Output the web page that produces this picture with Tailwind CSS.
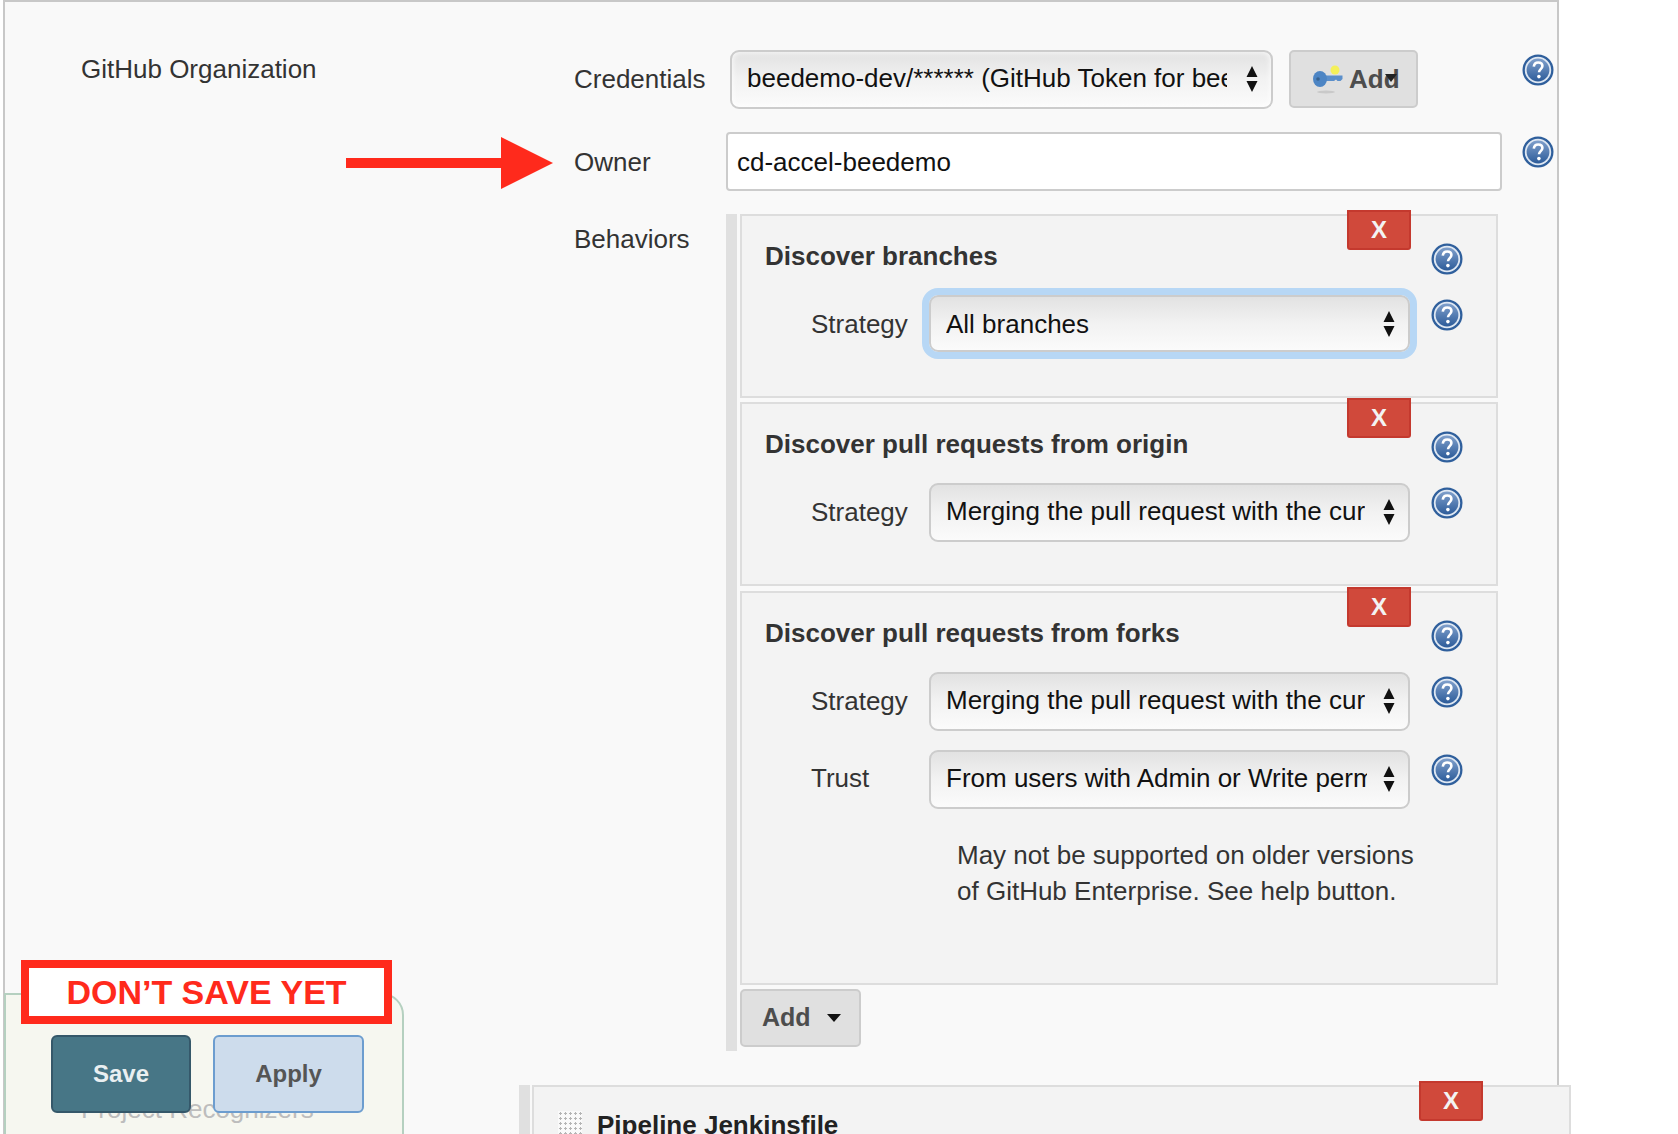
<!DOCTYPE html>
<html lang="en">

<head>
    <meta charset="UTF-8">
    <script src="https://cdn.jsdelivr.net/npm/@tailwindcss/browser@4"></script>
    <title>GitHub Organization</title>
</head>

<body class="bg-white">

    <!-- shared help icon -->
    <svg width="0" height="0" class="absolute">
        <defs>
            <linearGradient id="helpFill" x1="0" y1="0" x2="0" y2="1">
                <stop offset="0" stop-color="#7f9fcb" />
                <stop offset="1" stop-color="#2d5c9a" />
            </linearGradient>
            <symbol id="help" viewBox="0 0 32 32">
                <circle cx="16" cy="16" r="15.5" fill="#2f5f9c" />
                <circle cx="16" cy="16" r="13.2" fill="#dfe8f3" />
                <circle cx="16" cy="16" r="11.4" fill="url(#helpFill)" />
                <path d="M11.8 12.6c.3-2.7 2-4.1 4.4-4.1 2.5 0 4.2 1.5 4.2 3.6 0 3-3.4 3.1-3.4 6.2" fill="none" stroke="#fff" stroke-width="2.6" />
                <circle cx="16.9" cy="22.6" r="1.8" fill="#fff" />
            </symbol>
            <symbol id="updown" viewBox="0 0 12 26">
                <path d="M6 0l5.500 11H.5zM6 26L.5 15h11z" fill="#111" />
            </symbol>
        </defs>
    </svg>

    <div class="relative w-[1678px] h-[1134px] overflow-hidden font-['Liberation_Sans',Arial,sans-serif] text-[26px] text-[#333]">

        <!-- Main panel -->
        <div class="ml-[3px] w-[1556px] h-[1134px] border-t-2 border-l-2 border-r-2 border-[#c8c8c8] bg-[#f9f9f9] flex">

            <div class="w-[493px] ml-[76px] shrink-0 pt-[50px] leading-[34px]">GitHub Organization</div>

            <div class="w-[980px] shrink-0 pt-[48px]">

                <!-- Credentials -->
                <div class="flex items-start h-[82px]">
                    <div class="w-[156px] pt-[12px] leading-[34px]">Credentials</div>
                    <div class="w-[543px] h-[59px] flex items-center pl-[15px] pr-[13px] pb-[2px] rounded-[9px] border-2 border-[#ccc] bg-gradient-to-b from-[#e2e2e2] via-[#f2f2f2] to-[#fbfbfb] shadow-[inset_0_0_6px_#fff] text-[#111]">
                        <div class="flex-1 overflow-hidden whitespace-nowrap">beedemo-dev/****** (GitHub Token for bee</div>
                        <svg class="w-[12px] h-[26px] ml-[19px] shrink-0"><use href="#updown" /></svg>
                    </div>
                    <div class="relative w-[129px] h-[58px] ml-[16px] flex items-center pl-[21px] gap-[5px] rounded-[5px] border-2 border-[#ccc] bg-[#e0e0e0] font-bold text-[#4d4d4d]">
                        <svg width="32" height="34" viewBox="0 0 32 34" class="shrink-0">
                            <ellipse cx="14" cy="30" rx="9" ry="1.400" fill="#c9c9c9" />
                            <circle cx="23" cy="8" r="4.500" fill="#f4f05a" />
                            <path d="M11 13.500h19.500v3.500l-2 2h-3l-1.500-1.500-2 1.500h-11z" fill="#5b8fcb" />
                            <ellipse cx="8" cy="17" rx="7" ry="8" fill="#4d85c4" />
                            <circle cx="6" cy="17" r="1.800" fill="#37628f" />
                        </svg>
                        <span>Add</span>
                        <div class="absolute left-[94px] top-[22px] border-x-[6px] border-t-[8px] border-x-transparent border-t-[#222]"></div>
                    </div>
                    <svg class="w-[32px] h-[32px] ml-[104px] mt-[4px] shrink-0"><use href="#help" /></svg>
                </div>

                <!-- Owner -->
                <div class="flex items-start h-[82px]">
                    <div class="w-[152px] pt-[13px] leading-[34px]">Owner</div>
                    <div class="w-[776px] h-[59px] flex items-center pl-[9px] pt-[1px] rounded-[4px] border-2 border-[#ccc] bg-white text-[#111]">cd-accel-beedemo</div>
                    <svg class="w-[32px] h-[32px] ml-[20px] mt-[4px] shrink-0"><use href="#help" /></svg>
                </div>

                <!-- Behaviors -->
                <div class="flex items-start">
                    <div class="w-[152px] pt-[8px] leading-[34px]">Behaviors</div>
                    <div class="w-[772px] border-l-[11px] border-[#e0e0e0] pl-[3px] h-[837px]">

                        <div class="relative w-[758px] h-[184px] mb-[4px] border-2 border-[#ddd] bg-[#f3f3f3]">
                            <div class="absolute left-[605px] top-[-6px] w-[64px] h-[40px] flex items-center justify-center rounded-b-[3px] border-2 border-[#c4392e] bg-[#d0493b] text-[#f3f3f3] text-[24px] font-bold">X</div>
                            <div class="flex items-start pl-[23px] pt-[24px] h-[79px] font-bold">
                                <div class="w-[666px] leading-[32px]">Discover branches</div>
                                <svg class="w-[32px] h-[32px] mt-[3px]"><use href="#help" /></svg>
                            </div>
                            <div class="flex items-start pl-[69px]">
                                <div class="w-[118px] pt-[12px] leading-[34px]">Strategy</div>
                                <div class="w-[481px] h-[57px] flex items-center pl-[15px] pr-[13px] pt-[1px] rounded-[9px] border-2 border-[#ccc] bg-gradient-to-b from-[#e2e2e2] via-[#f2f2f2] to-[#fbfbfb] outline-[7px] outline-[#b7d7f5] text-[#111]">
                                    <div class="flex-1 overflow-hidden whitespace-nowrap">All branches</div>
                                    <svg class="w-[12px] h-[26px] ml-[16px] shrink-0"><use href="#updown" /></svg>
                                </div>
                                <svg class="w-[32px] h-[32px] ml-[21px] mt-[4px]"><use href="#help" /></svg>
                            </div>
                        </div>

                        <div class="relative w-[758px] h-[184px] mb-[5px] border-2 border-[#ddd] bg-[#f3f3f3]">
                            <div class="absolute left-[605px] top-[-6px] w-[64px] h-[40px] flex items-center justify-center rounded-b-[3px] border-2 border-[#c4392e] bg-[#d0493b] text-[#f3f3f3] text-[24px] font-bold">X</div>
                            <div class="flex items-start pl-[23px] pt-[24px] h-[79px] font-bold">
                                <div class="w-[666px] leading-[32px]">Discover pull requests from origin</div>
                                <svg class="w-[32px] h-[32px] mt-[3px]"><use href="#help" /></svg>
                            </div>
                            <div class="flex items-start pl-[69px]">
                                <div class="w-[118px] pt-[12px] leading-[34px]">Strategy</div>
                                <div class="w-[481px] h-[59px] flex items-center pl-[15px] pr-[13px] pb-[2px] rounded-[9px] border-2 border-[#ccc] bg-gradient-to-b from-[#e2e2e2] via-[#f2f2f2] to-[#fbfbfb] text-[#111]">
                                    <div class="flex-1 overflow-hidden whitespace-nowrap">Merging the pull request with the current target branch revision</div>
                                    <svg class="w-[12px] h-[26px] ml-[18px] shrink-0"><use href="#updown" /></svg>
                                </div>
                                <svg class="w-[32px] h-[32px] ml-[21px] mt-[4px]"><use href="#help" /></svg>
                            </div>
                        </div>

                        <div class="relative w-[758px] h-[394px] mb-[4px] border-2 border-[#ddd] bg-[#f3f3f3]">
                            <div class="absolute left-[605px] top-[-6px] w-[64px] h-[40px] flex items-center justify-center rounded-b-[3px] border-2 border-[#c4392e] bg-[#d0493b] text-[#f3f3f3] text-[24px] font-bold">X</div>
                            <div class="flex items-start pl-[23px] pt-[24px] h-[79px] font-bold">
                                <div class="w-[666px] leading-[32px]">Discover pull requests from forks</div>
                                <svg class="w-[32px] h-[32px] mt-[3px]"><use href="#help" /></svg>
                            </div>
                            <div class="flex items-start pl-[69px] h-[78px]">
                                <div class="w-[118px] pt-[12px] leading-[34px]">Strategy</div>
                                <div class="w-[481px] h-[59px] flex items-center pl-[15px] pr-[13px] pb-[2px] rounded-[9px] border-2 border-[#ccc] bg-gradient-to-b from-[#e2e2e2] via-[#f2f2f2] to-[#fbfbfb] text-[#111]">
                                    <div class="flex-1 overflow-hidden whitespace-nowrap">Merging the pull request with the current target branch revision</div>
                                    <svg class="w-[12px] h-[26px] ml-[18px] shrink-0"><use href="#updown" /></svg>
                                </div>
                                <svg class="w-[32px] h-[32px] ml-[21px] mt-[4px]"><use href="#help" /></svg>
                            </div>
                            <div class="flex items-start pl-[69px]">
                                <div class="w-[118px] pt-[11px] leading-[34px]">Trust</div>
                                <div class="w-[481px] h-[59px] flex items-center pl-[15px] pr-[13px] pb-[2px] rounded-[9px] border-2 border-[#ccc] bg-gradient-to-b from-[#e2e2e2] via-[#f2f2f2] to-[#fbfbfb] text-[#111]">
                                    <div class="flex-1 overflow-hidden whitespace-nowrap">From users with Admin or Write permission</div>
                                    <svg class="w-[12px] h-[26px] ml-[16px] shrink-0"><use href="#updown" /></svg>
                                </div>
                                <svg class="w-[32px] h-[32px] ml-[21px] mt-[4px]"><use href="#help" /></svg>
                            </div>
                            <div class="ml-[215px] mt-[28px] leading-[36px] whitespace-nowrap">May not be supported on older versions<br>of GitHub Enterprise. See help button.</div>
                        </div>

                        <div class="w-[121px] h-[58px] flex items-center pl-[20px] gap-[16px] rounded-[5px] border-2 border-[#ccc] bg-[#e0e0e0] font-bold text-[#4d4d4d] text-[25px]">
                            <span>Add</span>
                            <div class="border-x-[7px] border-t-[8px] border-x-transparent border-t-[#111]"></div>
                        </div>
                    </div>
                </div>
            </div>
        </div>

        <!-- Next section, starts below the fold -->
        <div class="absolute left-[519px] top-[1085px] w-[1052px] h-[60px] flex border-l-[11px] border-[#e0e0e0]">
            <div class="relative ml-[2px] flex-1 border-t-2 border-r-2 border-l-2 border-[#ddd] bg-[#f3f3f3] pl-[24px] pt-[22px] flex items-start gap-[15px]">
                <div class="w-[24px] h-[40px] mt-[2px] bg-[radial-gradient(#b5b5b5_1.2px,transparent_1.3px)] bg-[length:5px_5px] bg-white/60"></div>
                <div class="font-bold text-[#222] leading-[32px]">Pipeline Jenkinsfile</div>
                <div class="absolute left-[885px] top-[-6px] w-[64px] h-[40px] flex items-center justify-center rounded-b-[3px] border-2 border-[#c4392e] bg-[#d0493b] text-[#f3f3f3] text-[24px] font-bold">X</div>
            </div>
        </div>

        <!-- Sticky save bar -->
        <div class="absolute left-[4px] top-[993px] w-[400px] h-[150px] rounded-tr-[22px] border-2 border-[#b5d0c0] bg-[#f6f7f0] pl-[45px] pt-[40px] flex gap-[22px]">
            <div class="absolute left-[75px] top-[97px] text-[#bdbdbd] leading-[34px] whitespace-nowrap">Project Recognizers</div>
            <div class="relative w-[140px] h-[78px] flex items-center justify-center rounded-[6px] border-2 border-[#35586a] bg-[#477686] text-[#e9eff1] text-[24px] font-bold">Save</div>
            <div class="relative w-[151px] h-[78px] flex items-center justify-center rounded-[6px] border-2 border-[#6c9dcf] bg-[#cddcec] text-[#555] text-[24px] font-bold">Apply</div>
        </div>

        <!-- Annotations drawn over the screenshot -->
        <div class="absolute left-[21px] top-[960px] w-[371px] h-[64px] border-[8px] border-[#ff2a1c] bg-white flex items-center justify-center text-[#ff2a1c] text-[34px] font-bold whitespace-nowrap">DON’T SAVE YET</div>

        <svg class="absolute left-[346px] top-[137px]" width="207" height="52" viewBox="0 0 207 52">
            <path d="M0 21h155V0l52 26-52 26V31H0z" fill="#ff2a1c" />
        </svg>
    </div>

</body>

</html>
